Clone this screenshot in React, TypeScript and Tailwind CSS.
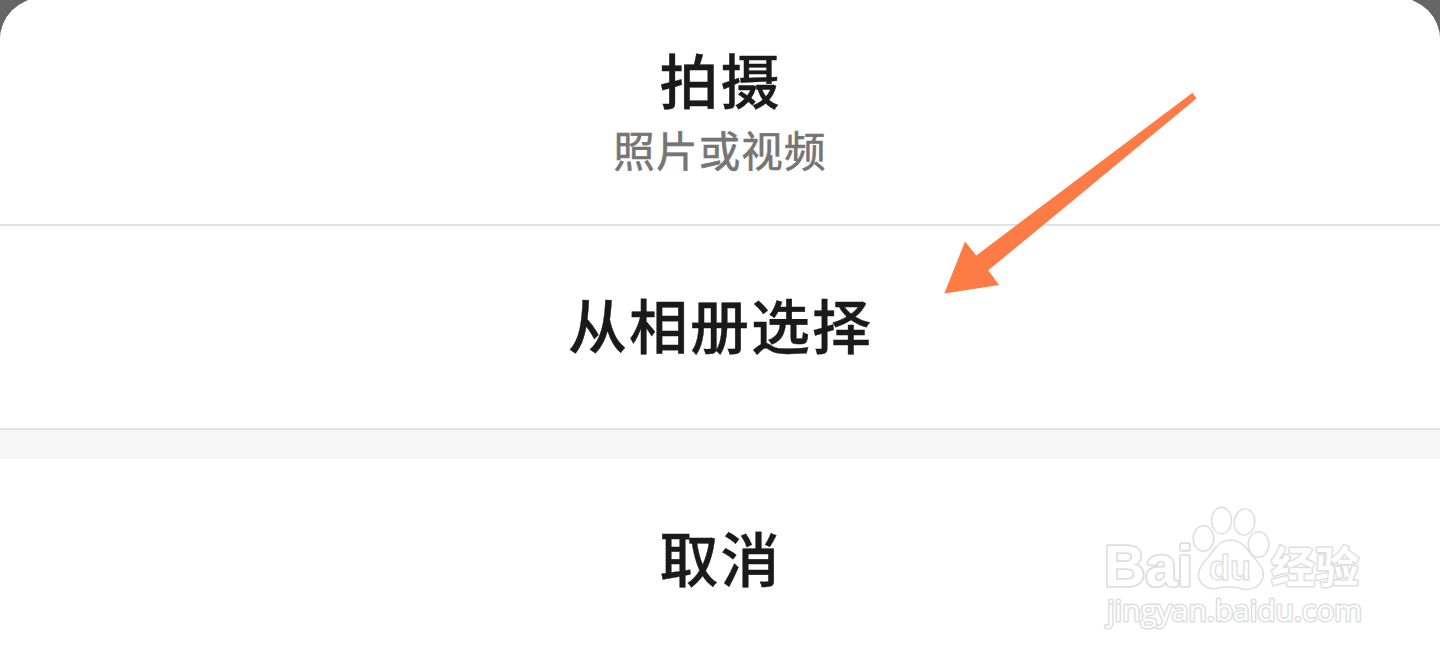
type SheetItemProps = {
  label: string;
  hint?: string;
  className: string;
};

function SheetItem({ label, hint, className }: SheetItemProps) {
  return (
    <button
      type="button"
      className={`flex w-full shrink-0 flex-col items-center bg-white ${className}`}
    >
      <span className="pl-px text-[59px] leading-[72px] font-medium tracking-[2px] text-[#1a1a1a] [-webkit-text-stroke:0.4px_#1a1a1a]">
        {label}
      </span>
      {hint && (
        <span className="pt-1 text-[41.5px] leading-[60px] tracking-[1.2px] text-[#757575] [-webkit-text-stroke:0.6px_#757575]">
          {hint}
        </span>
      )}
    </button>
  );
}

function Arrow() {
  return (
    <svg
      viewBox="0 0 253 202"
      className="pointer-events-none absolute top-[92px] left-[944px] h-[202px] w-[253px]"
    >
      <path d="M0.3 201.5 21 149.5 32.3 163.5 248.5 0.8 252.5 6.5 44.3 178.3 55 193Z" fill="#ff7b46" />
    </svg>
  );
}

function Watermark() {
  return (
    <svg
      viewBox="0 0 290 145"
      className="pointer-events-none absolute top-[495px] left-[1090px] h-[145px] w-[290px]"
      fill="#fff"
      stroke="#dedede"
      strokeWidth="1.5"
      strokeLinejoin="round"
    >
      <text
        x="14"
        y="91"
        fontSize="57"
        textLength="89"
        lengthAdjust="spacingAndGlyphs"
        strokeWidth="3.6"
        paintOrder="stroke"
        className="font-['Liberation_Sans',sans-serif] font-bold"
      >
        Bai
      </text>
      <ellipse cx="113.5" cy="43.5" rx="10.3" ry="12.8" />
      <ellipse cx="131.5" cy="25.5" rx="10" ry="13.2" />
      <ellipse cx="154.5" cy="27" rx="10.3" ry="13" transform="rotate(8 154.5 27)" />
      <ellipse cx="168.5" cy="49.5" rx="10.3" ry="12.8" />
      <path d="M140 45C131 45 126 51 122 57C117 65 109 70 108.500 79C108.500 89 117 94.500 126 93.500C135 91.500 144 91.500 153 94C162 96 171 91 173 82C175 72 166 66 160 58C155 51 150 45 140 45Z" />
      <text
        x="119"
        y="85"
        fontSize="35"
        textLength="42"
        lengthAdjust="spacingAndGlyphs"
        strokeWidth="1.3"
        className="font-['Liberation_Sans',sans-serif] font-bold"
      >
        du
      </text>
      <text
        x="181"
        y="88"
        fontSize="43"
        textLength="88"
        lengthAdjust="spacingAndGlyphs"
        strokeWidth="3"
        paintOrder="stroke"
        className="font-['Noto_Sans_CJK_SC',sans-serif] font-bold"
      >
        经验
      </text>
      <text
        x="17"
        y="126"
        fontSize="29"
        textLength="255"
        lengthAdjust="spacingAndGlyphs"
        strokeWidth="3"
        paintOrder="stroke"
        className="font-['Open_Sans',sans-serif]"
      >
        jingyan.baidu.com
      </text>
    </svg>
  );
}

export default function App() {
  return (
    <div className="relative h-[661px] w-full overflow-hidden bg-[#666] font-['Noto_Sans_CJK_SC',sans-serif]">
      <div className="-mt-0.5 flex flex-col overflow-hidden rounded-t-[42px] bg-white">
        <SheetItem label="拍摄" hint="照片或视频" className="h-[226px] pt-[45px]" />
        <div className="h-0.5 bg-[#e2e2e2]" />
        <SheetItem label="从相册选择" className="h-[202px] pt-[62px]" />
        <div className="h-0.5 bg-[#e2e2e2]" />
        <div className="h-[29px] bg-[#f6f6f6]" />
        <SheetItem label="取消" className="h-[202px] pt-[62px]" />
      </div>
      <Arrow />
      <Watermark />
    </div>
  );
}
